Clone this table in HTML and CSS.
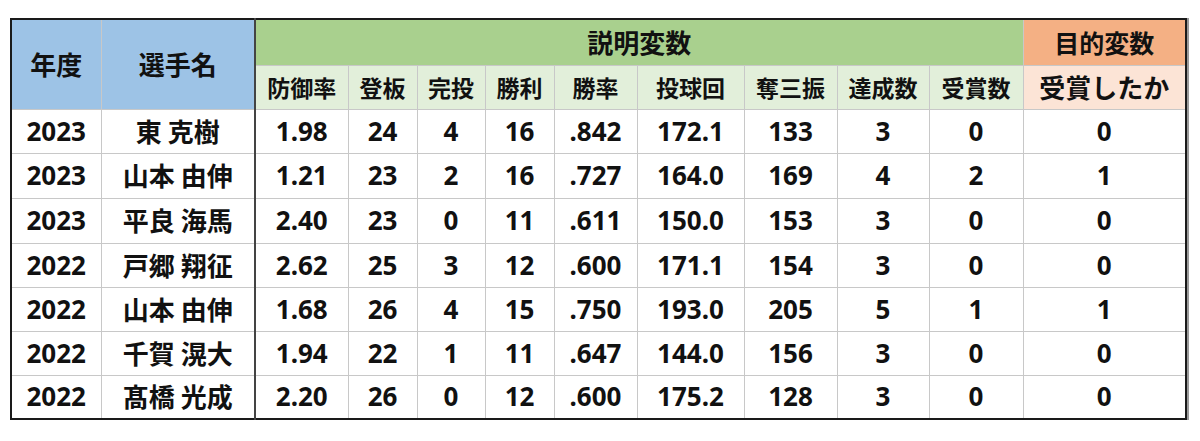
FILE: index.html
```html
<!DOCTYPE html>
<html lang="ja">
<head>
<meta charset="utf-8">
<title>投手成績</title>
<link rel="stylesheet" href="styles.css">
</head>
<body>
<table class="stats">
  <colgroup>
    <col class="c-year"><col class="c-name"><col class="c-era"><col class="c-gp"><col class="c-cg"><col class="c-w"><col class="c-pct"><col class="c-ip"><col class="c-so"><col class="c-ach"><col class="c-aw"><col class="c-target">
  </colgroup>
  <thead>
    <tr class="h1">
      <th rowspan="2" class="key">年度</th>
      <th rowspan="2" class="key sep">選手名</th>
      <th colspan="9" class="expl">説明変数</th>
      <th class="obj">目的変数</th>
    </tr>
    <tr class="h2">
      <th class="sub">防御率</th>
      <th class="sub">登板</th>
      <th class="sub">完投</th>
      <th class="sub">勝利</th>
      <th class="sub">勝率</th>
      <th class="sub">投球回</th>
      <th class="sub">奪三振</th>
      <th class="sub">達成数</th>
      <th class="sub">受賞数</th>
      <th class="obj-sub">受賞したか</th>
    </tr>
  </thead>
  <tbody>
    <tr class="r44"><td>2023</td><td class="name sep">東 克樹</td><td>1.98</td><td>24</td><td>4</td><td>16</td><td>.842</td><td>172.1</td><td>133</td><td>3</td><td>0</td><td class="target">0</td></tr>
    <tr class="r45"><td>2023</td><td class="name sep">山本 由伸</td><td>1.21</td><td>23</td><td>2</td><td>16</td><td>.727</td><td>164.0</td><td>169</td><td>4</td><td>2</td><td class="target">1</td></tr>
    <tr class="r45"><td>2023</td><td class="name sep">平良 海馬</td><td>2.40</td><td>23</td><td>0</td><td>11</td><td>.611</td><td>150.0</td><td>153</td><td>3</td><td>0</td><td class="target">0</td></tr>
    <tr class="r44"><td>2022</td><td class="name sep">戸郷 翔征</td><td>2.62</td><td>25</td><td>3</td><td>12</td><td>.600</td><td>171.1</td><td>154</td><td>3</td><td>0</td><td class="target">0</td></tr>
    <tr class="r44"><td>2022</td><td class="name sep">山本 由伸</td><td>1.68</td><td>26</td><td>4</td><td>15</td><td>.750</td><td>193.0</td><td>205</td><td>5</td><td>1</td><td class="target">1</td></tr>
    <tr class="r44"><td>2022</td><td class="name sep">千賀 滉大</td><td>1.94</td><td>22</td><td>1</td><td>11</td><td>.647</td><td>144.0</td><td>156</td><td>3</td><td>0</td><td class="target">0</td></tr>
    <tr class="r44"><td>2022</td><td class="name sep">髙橋 光成</td><td>2.20</td><td>26</td><td>0</td><td>12</td><td>.600</td><td>175.2</td><td>128</td><td>3</td><td>0</td><td class="target">0</td></tr>
  </tbody>
</table>
</body>
</html>
```
FILE: styles.css
```css
html, body {
  margin: 0;
  padding: 0;
  background: #ffffff;
}

body {
  padding: 18px 0 0 10px;
  font-family: "Noto Sans", "Noto Sans CJK JP", sans-serif;
  color: #111111;
}

.stats {
  border-collapse: collapse;
  table-layout: fixed;
  width: 1175px;
  border: 2px solid #1a1a1a;
  box-shadow: 2px 0 0 #9a9a9a;
}

.c-year { width: 90px; }
.c-name { width: 154px; }
.c-era { width: 93px; }
.c-gp { width: 69px; }
.c-cg { width: 68px; }
.c-w { width: 69px; }
.c-pct { width: 83px; }
.c-ip { width: 107px; }
.c-so { width: 93px; }
.c-ach { width: 92px; }
.c-aw { width: 94px; }
.c-target { width: 163px; }

.stats th,
.stats td {
  padding: 0;
  text-align: center;
  vertical-align: middle;
  border: 1px solid #c8c8c8;
  font-weight: 700;
  line-height: 1;
  white-space: nowrap;
  overflow: hidden;
}

.stats td {
  font-size: 26px;
  padding-bottom: 1px;
}

.h1 { height: 46px; }
.h2 { height: 44px; }
.r44 { height: 44px; }
.r45 { height: 45px; }

.key {
  background: #9dc3e6;
  font-family: "Noto Sans CJK JP", sans-serif;
  font-size: 26px;
  padding-bottom: 8px;
}

.expl {
  background: #a9d08e;
  font-family: "Noto Sans CJK JP", sans-serif;
  font-size: 26px;
  padding-bottom: 4px;
}

.obj {
  background: #f4b084;
  font-family: "Noto Sans CJK JP", sans-serif;
  font-size: 25px;
  border-left: 1px solid #000000;
  padding-bottom: 4px;
}

.sub {
  background: #e2efda;
  font-family: "Noto Sans CJK JP", sans-serif;
  font-size: 23px;
  padding-bottom: 2px;
}

.obj-sub {
  background: #fce4d6;
  font-family: "Noto Sans CJK JP", sans-serif;
  font-size: 26px;
  border-left: 1px solid #000000;
  padding-bottom: 2px;
}

.name {
  font-family: "Noto Sans CJK JP", sans-serif;
}

.stats .sep {
  border-right: 2px solid #444444;
}

.stats .target {
  border-left: 1px solid #000000;
}
```
